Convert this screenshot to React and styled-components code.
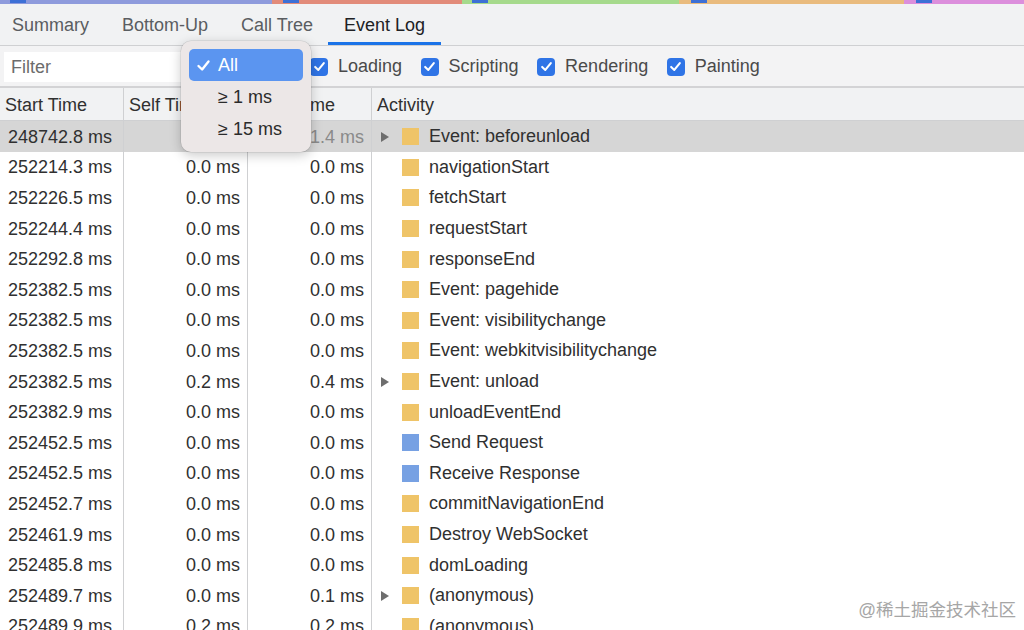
import React from 'react'
import styled, { createGlobalStyle } from 'styled-components'

const GlobalStyle = createGlobalStyle`
    html, body {
        margin: 0;
        padding: 0;
        background: #ffffff;
        font-family: "Liberation Sans", Arial, sans-serif;
        overflow: hidden;
    }
`

const strip = [
    { color: '#8e9bdc', width: 272, chip: 10 },
    { color: '#e28b79', width: 190, chip: 11 },
    { color: '#a6da8c', width: 217, chip: 10 },
    { color: '#e9bb7d', width: 225, chip: 12 },
    { color: '#dc8fdc', width: 120, chip: 12 },
]

const tabs = [
    { label: 'Summary', width: 104 },
    { label: 'Bottom-Up', width: 122 },
    { label: 'Call Tree', width: 102 },
    { label: 'Event Log', width: 113 },
]
const categories = ['Loading', 'Scripting', 'Rendering', 'Painting']

const rows = [
    ['248742.8 ms', '1.4 ms', '1.4 ms', 'Event: beforeunload', 'y', true],
    ['252214.3 ms', '0.0 ms', '0.0 ms', 'navigationStart', 'y'],
    ['252226.5 ms', '0.0 ms', '0.0 ms', 'fetchStart', 'y'],
    ['252244.4 ms', '0.0 ms', '0.0 ms', 'requestStart', 'y'],
    ['252292.8 ms', '0.0 ms', '0.0 ms', 'responseEnd', 'y'],
    ['252382.5 ms', '0.0 ms', '0.0 ms', 'Event: pagehide', 'y'],
    ['252382.5 ms', '0.0 ms', '0.0 ms', 'Event: visibilitychange', 'y'],
    ['252382.5 ms', '0.0 ms', '0.0 ms', 'Event: webkitvisibilitychange', 'y'],
    ['252382.5 ms', '0.2 ms', '0.4 ms', 'Event: unload', 'y', true],
    ['252382.9 ms', '0.0 ms', '0.0 ms', 'unloadEventEnd', 'y'],
    ['252452.5 ms', '0.0 ms', '0.0 ms', 'Send Request', 'b'],
    ['252452.5 ms', '0.0 ms', '0.0 ms', 'Receive Response', 'b'],
    ['252452.7 ms', '0.0 ms', '0.0 ms', 'commitNavigationEnd', 'y'],
    ['252461.9 ms', '0.0 ms', '0.0 ms', 'Destroy WebSocket', 'y'],
    ['252485.8 ms', '0.0 ms', '0.0 ms', 'domLoading', 'y'],
    ['252489.7 ms', '0.0 ms', '0.1 ms', '(anonymous)', 'y', true],
    ['252489.9 ms', '0.2 ms', '0.2 ms', '(anonymous)', 'y'],
]

function Check({ size = 12 }) {
    return (
        <svg width={size} height={size} viewBox="0 0 12 12">
            <polyline points="2,6.4 4.9,9.2 10,2.8" fill="none" stroke="#fff" strokeWidth="1.9" strokeLinecap="round" strokeLinejoin="round" />
        </svg>
    )
}

function App() {
    return (
        <Page>
            <GlobalStyle />
            <Strip>
                {strip.map((s, i) => (
                    <Segment key={i} color={s.color} w={s.width}>
                        <Chip style={{ marginLeft: s.chip }} />
                    </Segment>
                ))}
            </Strip>

            <TabBar>
                {tabs.map(t => (
                    <Tab key={t.label} w={t.width} active={t.label === 'Event Log'}>{t.label}</Tab>
                ))}
            </TabBar>

            <Toolbar>
                <FilterInput placeholder="Filter" />
                <SelectButton>All</SelectButton>
                <Categories>
                    {categories.map(c => (
                        <CheckLabel key={c}>
                            <CheckBox><Check size={13} /></CheckBox>
                            {c}
                        </CheckLabel>
                    ))}
                </Categories>
            </Toolbar>

            <Table>
                <HeaderCell>Start Time</HeaderCell>
                <HeaderCell>Self Time</HeaderCell>
                <HeaderCell>Total Time</HeaderCell>
                <HeaderCell last>Activity</HeaderCell>
                {rows.map(([start, self, total, name, kind, expand], i) => (
                    <Row key={i} selected={i === 0}>
                        <Cell>{start}</Cell>
                        <Cell right>{self}</Cell>
                        <Cell right faded={i === 0}>{total}</Cell>
                        <ActivityCell>
                            <Arrow>{expand ? <ArrowShape /> : null}</Arrow>
                            <Swatch kind={kind} />
                            {name}
                        </ActivityCell>
                    </Row>
                ))}
            </Table>

            <Popup>
                <PopupItem selected>
                    <PopupCheck><Check size={15} /></PopupCheck>
                    All
                </PopupItem>
                <PopupItem>≥ 1 ms</PopupItem>
                <PopupItem>≥ 15 ms</PopupItem>
            </Popup>

            <Watermark>@稀土掘金技术社区</Watermark>
        </Page>
    )
}

export default App

const Page = styled.div`
    position: relative;
    width: 1024px;
    height: 630px;
    overflow: hidden;
    background: #ffffff;
    color: #303030;
`

const Strip = styled.div`
    display: flex;
    height: 4px;
`

const Segment = styled.div`
    width: ${props => props.w}px;
    background: ${props => props.color};
    display: flex;
`

const Chip = styled.div`
    width: 16px;
    height: 3px;
    background: #3d70d6;
`

const TabBar = styled.div`
    display: flex;
    height: 42px;
    background: #f1f2f3;
    border-bottom: 1px solid #cfd0d2;
    box-sizing: border-box;
`

const Tab = styled.div`
    width: ${props => props.w}px;
    display: flex;
    align-items: center;
    justify-content: center;
    padding-top: 4px;
    box-sizing: border-box;
    font-size: 18px;
    color: ${props => props.active ? '#202124' : '#5a5d61'};
    border-bottom: 3px solid ${props => props.active ? '#1a73e8' : 'transparent'};
    &:first-child {
        justify-content: flex-start;
        padding-left: 12px;
    }
`

const Toolbar = styled.div`
    display: flex;
    align-items: center;
    height: 42px;
    background: #f3f3f4;
    border-bottom: 2px solid #d3d3d5;
    box-sizing: border-box;
    padding: 1px 0 0 4px;
`

const FilterInput = styled.input`
    width: 200px;
    height: 30px;
    border: none;
    outline: none;
    background: #ffffff;
    box-sizing: border-box;
    padding: 2px 7px 0;
    font-family: inherit;
    font-size: 18px;
    color: #303030;
    &::placeholder {
        color: #6c6c6c;
    }
`

const SelectButton = styled.div`
    width: 90px;
    font-size: 18px;
    padding-left: 10px;
    color: #303030;
`

const Categories = styled.div`
    display: flex;
    align-items: center;
    gap: 18.5px;
    margin-left: 6px;
`

const CheckLabel = styled.label`
    display: flex;
    align-items: center;
    gap: 10px;
    font-size: 18px;
    color: #4a4a4a;
`

const CheckBox = styled.span`
    width: 18px;
    height: 18px;
    border-radius: 4px;
    background: #2f74e6;
    display: flex;
    align-items: center;
    justify-content: center;
`

const Table = styled.div`
    display: grid;
    grid-template-columns: 124px 124px 124px 1fr;
`

const HeaderCell = styled.div`
    height: 33px;
    box-sizing: border-box;
    display: flex;
    align-items: center;
    padding: 3px 0 0 5px;
    background: #f1f2f3;
    border-bottom: 1px solid #cfd0d2;
    border-right: ${props => props.last ? 'none' : '1px solid #cfd0d2'};
    font-size: 18px;
    color: #303030;
    white-space: nowrap;
    overflow: hidden;
`

const Row = styled.div`
    display: contents;
    & > div {
        background: ${props => props.selected ? '#d6d6d6' : '#ffffff'};
    }
`

const Cell = styled.div`
    height: 30.6px;
    box-sizing: border-box;
    display: flex;
    align-items: center;
    justify-content: ${props => props.right ? 'flex-end' : 'flex-start'};
    padding: ${props => props.right ? '2px 7px 0 0' : '2px 0 0 8px'};
    border-right: 1px solid #cfd0d2;
    font-size: 18px;
    color: ${props => props.faded ? '#8a8a8a' : '#303030'};
    white-space: nowrap;
`

const ActivityCell = styled.div`
    height: 30.6px;
    box-sizing: border-box;
    display: flex;
    align-items: center;
    font-size: 18px;
    color: #303030;
    white-space: nowrap;
    padding: 1px 0 0 9px;
`

const Arrow = styled.span`
    width: 21px;
    display: flex;
    align-items: center;
`

const ArrowShape = styled.span`
    width: 0;
    height: 0;
    border-top: 5px solid transparent;
    border-bottom: 5px solid transparent;
    border-left: 8px solid #6e6e6e;
`

const Swatch = styled.span`
    width: 17px;
    height: 17px;
    margin-right: 10px;
    background: ${props => props.kind === 'b' ? '#77a1e3' : '#efc468'};
`

const Popup = styled.div`
    position: absolute;
    left: 181px;
    top: 41px;
    width: 130px;
    box-sizing: border-box;
    padding: 8px 8px 7px;
    background: #ece7e7;
    border-radius: 10px;
    box-shadow: 0 3px 12px rgba(0, 0, 0, 0.22), 0 0 0 0.5px rgba(0, 0, 0, 0.12);
    display: flex;
    flex-direction: column;
`

const PopupItem = styled.div`
    height: 32px;
    display: flex;
    align-items: center;
    padding: 1px 0 0 ${props => props.selected ? '7px' : '29px'};
    box-sizing: border-box;
    border-radius: 5px;
    background: ${props => props.selected ? '#5b95f0' : 'transparent'};
    color: ${props => props.selected ? '#ffffff' : '#2b2b2b'};
    font-size: 18px;
    white-space: nowrap;
`

const PopupCheck = styled.span`
    width: 22px;
    display: flex;
    align-items: center;
`

const Watermark = styled.div`
    position: absolute;
    right: 8px;
    bottom: 9px;
    font-family: "Liberation Sans", "Noto Sans CJK SC", sans-serif;
    font-size: 17.5px;
    color: #a6a6a6;
`
